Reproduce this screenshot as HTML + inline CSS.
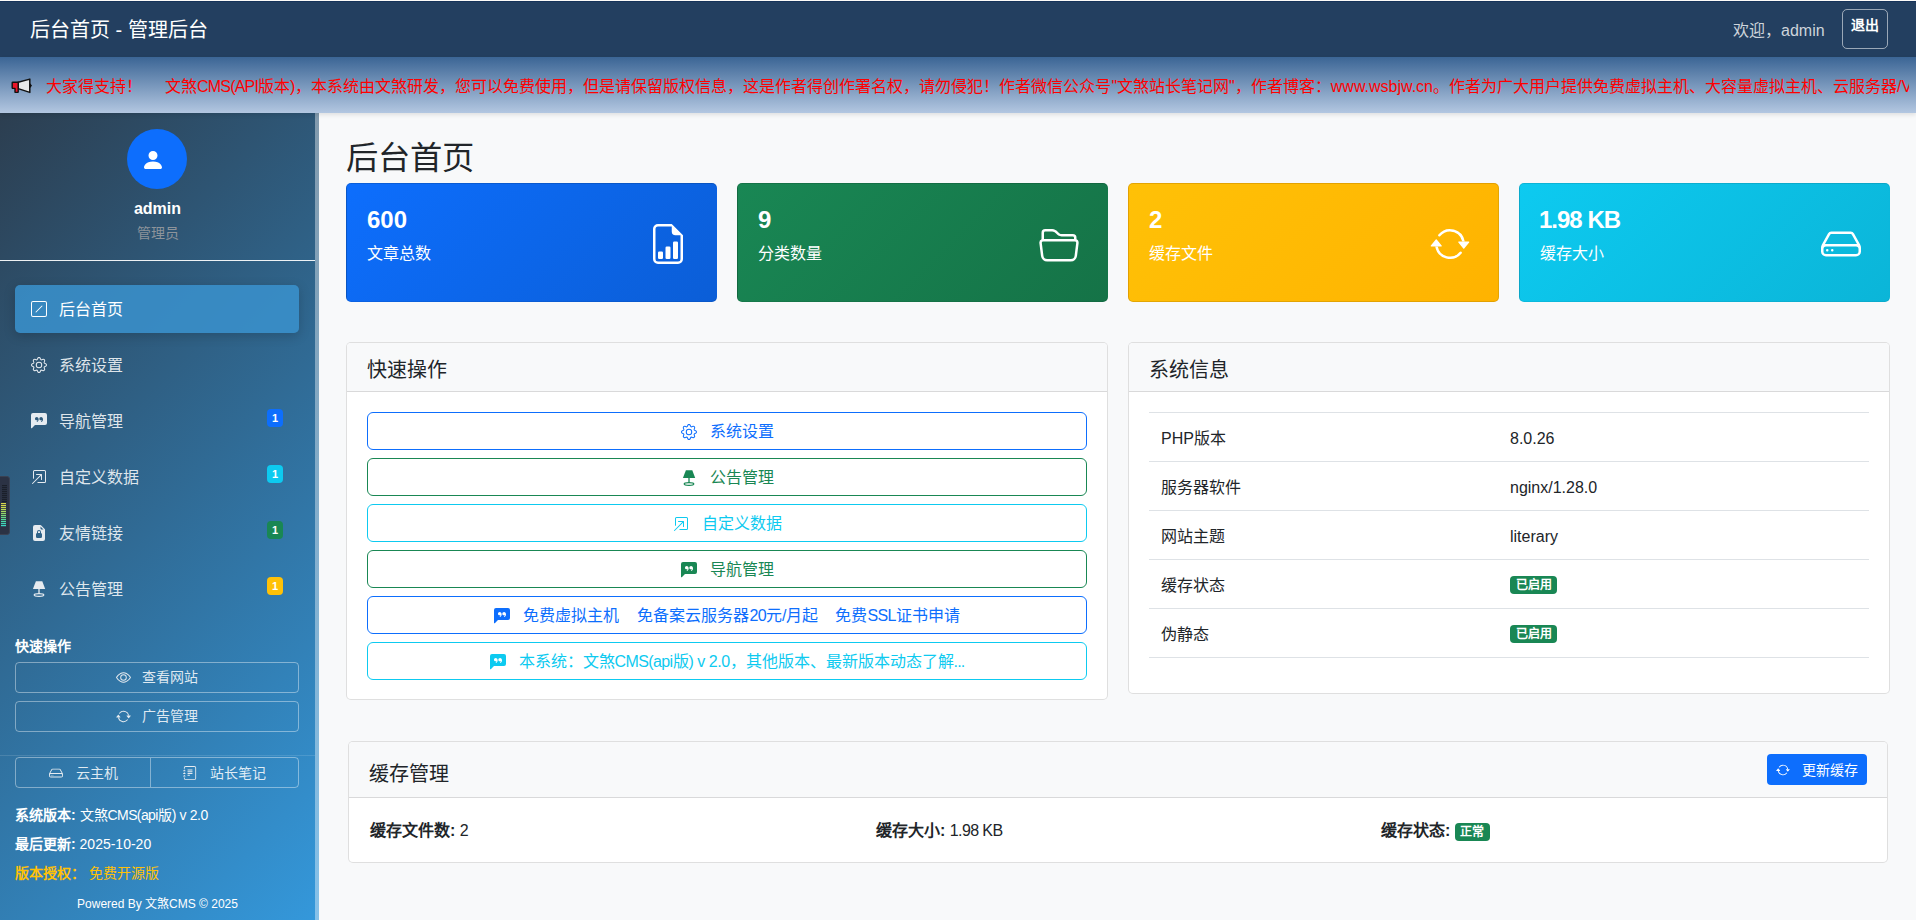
<!DOCTYPE html>
<html lang="zh-CN"><head><meta charset="utf-8"><title>后台首页 - 管理后台</title>
<style>
*{box-sizing:border-box;margin:0;padding:0}
html,body{width:1916px;height:920px;overflow:hidden;background:#f8f9fa;font-family:"Liberation Sans",sans-serif;color:#212529;font-size:16px;line-height:1.5}
.abs{position:absolute}
svg{display:block}
#topline{left:0;top:0;width:1916px;height:1px;background:#fdfbf8}
#nav{left:0;top:1px;width:1916px;height:56px;background:#233f60;border-top:1px solid #16335a}
#brand{left:30px;top:14px;color:#fff;font-size:20px;line-height:30px;white-space:nowrap}
#welcome{left:1733px;top:15px;color:rgba(255,255,255,.78);font-size:16px;line-height:30px;white-space:nowrap}
#logout{left:1842px;top:9px;width:46px;height:40px;border:1px solid rgba(255,255,255,.55);border-radius:5px;color:#fff;font-size:14px;font-weight:bold;text-align:center;line-height:30px}
#marq{left:0;top:57px;width:1916px;height:56px;background:linear-gradient(to bottom,#3b6595 0%,#b3c7e1 100%);box-shadow:0 2px 4px rgba(0,0,0,.1);overflow:hidden;z-index:3}
#marqtext{left:46px;top:15px;width:1863px;overflow:hidden;white-space:nowrap;color:#ff0000;font-size:16px;line-height:30px}
#side{left:0;top:113px;width:319px;height:807px;background:linear-gradient(135deg,#2c3e50 0%,#3498db 100%) border-box;border-right:4px solid rgba(255,255,255,.4);overflow:hidden;z-index:1}
#sbar{left:315px;top:113px;width:4px;height:807px;background:rgba(200,215,230,.55)}
.navi{position:absolute;left:15px;width:284px;height:48px;border-radius:5px;color:rgba(255,255,255,.85);font-size:16px}
.navi.active{background:rgba(58,146,206,.85);box-shadow:0 3px 12px rgba(0,0,0,.18);color:#fff}
.navi .ic{position:absolute;left:16px;top:16px;width:16px;height:16px}
.navi .tx{position:absolute;left:44px;top:13px;line-height:24px;white-space:nowrap}
.badge{position:absolute;left:252px;top:12px;width:16px;height:18px;border-radius:4px;color:#fff;font-size:11px;font-weight:bold;text-align:center;line-height:18px}
.sbtn{position:absolute;left:15px;width:284px;height:31px;border:1px solid rgba(255,255,255,.4);border-radius:4px;color:rgba(255,255,255,.85);font-size:14px}
.main{position:absolute}
.card{position:absolute;border:1px solid rgba(0,0,0,.125);border-radius:5px;background:#fff;overflow:hidden}
.stat{color:#fff}
.stat .num{position:absolute;left:20px;top:21px;font-size:24px;font-weight:bold;line-height:29px;white-space:nowrap}
.stat .lbl{position:absolute;left:20px;top:58px;font-size:16px;line-height:24px}
.stat svg{position:absolute;left:301px;top:40px;width:40px;height:40px}
.chead{position:absolute;left:0;top:0;right:0;height:49px;background:#f8f9fa;border-bottom:1px solid rgba(0,0,0,.125)}
.chead h5{position:absolute;left:20px;top:15px;font-size:20px;font-weight:normal;line-height:24px;color:#212529}
.qbtn{position:absolute;left:20px;width:720px;height:38px;padding-top:1px;border:1px solid;border-radius:6px;font-size:16px;line-height:24px;display:flex;align-items:center;justify-content:center;white-space:nowrap}
.qbtn svg{width:16px;height:16px;margin-right:13px}
.tr{position:absolute;left:20px;width:720px;height:49px;border-top:1px solid #dee2e6;font-size:16px;color:#212529}
.tr .c1{position:absolute;left:12px;top:14px;line-height:24px}
.tr .c2{position:absolute;left:361px;top:14px;line-height:24px}
.gb{display:inline-block;position:relative;top:-2px;background:#198754;color:#fff;font-size:12px;line-height:18px;padding:0 5.5px;border-radius:4px;font-weight:bold}
</style></head><body>
<div id="topline" class="abs"></div>
<div id="nav" class="abs">
  <div id="brand" class="abs" style="top:13px">后台首页 - 管理后台</div>
  <div id="welcome" class="abs" style="top:14px">欢迎，admin</div>
  <div id="logout" class="abs" style="top:7px">退出</div>
</div>
<div id="marq" class="abs">
  <svg class="abs" style="left:11px;top:21px" width="22" height="17" viewBox="0 0 22 17">
    <path d="M18.8 6 L20.3 7.7 L18.8 9.4 Z" fill="#111" stroke="#111" stroke-width="1.2" stroke-linejoin="round"/>
    <path d="M7.2 4.2 L18.8 1.1 L18.8 14.4 L7.2 10.6 Z" fill="#e8e8e8" stroke="#111" stroke-width="1.5" stroke-linejoin="round"/>
    <path d="M1.2 4.8 Q1.2 4.2 1.8 4.2 L7.2 4.2 L7.2 14 Q7.2 14.4 6.8 14.4 L4.4 14.4 Q4 14.4 4 14 L4 10.4 L1.8 10.4 Q1.2 10.4 1.2 9.8 Z" fill="#ec1427" stroke="#111" stroke-width="1.4" stroke-linejoin="round"/>
  </svg>
  <div id="marqtext" class="abs">大家得支持！<span style="display:inline-block;width:23px"></span>文煞<span style="letter-spacing:-0.8px">CMS(API</span>版本)，本系统由文煞研发，您可以免费使用，但是请保留版权信息，这是作者得创作署名权，请勿侵犯！作者微信公众号"文煞站长笔记网"，作者博客：www.wsbjw.cn。作者为广大用户提供免费虚拟主机、大容量虚拟主机、云服务器/VPS服务器</div>
</div>

<div id="side" class="abs">
  <div class="abs" style="left:127px;top:16px;width:60px;height:60px;border-radius:50%;background:#0d6efd"></div>
  <svg class="abs" style="left:141px;top:35px" width="24" height="24" viewBox="0 0 16 16"><path fill="#fff" d="M3 14s-1 0-1-1 1-4 6-4 6 3 6 4-1 1-1 1zm5-6a3 3 0 1 0 0-6 3 3 0 0 0 0 6"/></svg>
  <div class="abs" style="left:0;width:315px;top:84px;text-align:center;color:#fff;font-weight:bold;font-size:16px;line-height:24px">admin</div>
  <div class="abs" style="left:0;width:315px;top:110px;text-align:center;color:#8d949b;font-size:14px;line-height:20px">管理员</div>
  <div class="abs" style="left:0;top:147px;width:315px;height:1px;background:rgba(255,255,255,.92)"></div>

  <div class="navi active" style="top:172px">
    <svg class="ic" viewBox="0 0 16 16" fill="#fff"><path d="M14 1a1 1 0 0 1 1 1v12a1 1 0 0 1-1 1H2a1 1 0 0 1-1-1V2a1 1 0 0 1 1-1zM2 0a2 2 0 0 0-2 2v12a2 2 0 0 0 2 2h12a2 2 0 0 0 2-2V2a2 2 0 0 0-2-2z"/><path d="M11.354 4.646a.5.5 0 0 1 0 .708l-6 6a.5.5 0 0 1-.708-.708l6-6a.5.5 0 0 1 .708 0"/></svg>
    <div class="tx">后台首页</div>
  </div>
  <div class="navi" style="top:228px">
    <svg class="ic" viewBox="0 0 16 16" fill="#e6ebf0"><path d="M8 4.754a3.246 3.246 0 1 0 0 6.492 3.246 3.246 0 0 0 0-6.492M5.754 8a2.246 2.246 0 1 1 4.492 0 2.246 2.246 0 0 1-4.492 0"/><path d="M9.796 1.343c-.527-1.79-3.065-1.79-3.592 0l-.094.319a.873.873 0 0 1-1.255.52l-.292-.16c-1.64-.892-3.433.902-2.54 2.541l.159.292a.873.873 0 0 1-.52 1.255l-.319.094c-1.79.527-1.790 3.065 0 3.592l.319.094a.873.873 0 0 1 .52 1.255l-.16.292c-.892 1.64.901 3.434 2.541 2.54l.292-.159a.873.873 0 0 1 1.255.52l.094.319c.527 1.79 3.065 1.79 3.592 0l.094-.319a.873.873 0 0 1 1.255-.52l.292.16c1.64.893 3.434-.902 2.54-2.541l-.159-.292a.873.873 0 0 1 .52-1.255l.319-.094c1.79-.527 1.79-3.065 0-3.592l-.319-.094a.873.873 0 0 1-.52-1.255l.16-.292c.893-1.64-.902-3.433-2.541-2.54l-.292.159a.873.873 0 0 1-1.255-.52zm-2.633.283c.246-.835 1.428-.835 1.674 0l.094.319a1.873 1.873 0 0 0 2.693 1.115l.291-.16c.764-.415 1.6.42 1.184 1.185l-.159.292a1.873 1.873 0 0 0 1.116 2.692l.318.094c.835.246.835 1.428 0 1.674l-.319.094a1.873 1.873 0 0 0-1.115 2.693l.16.291c.415.764-.42 1.600-1.185 1.184l-.291-.159a1.873 1.873 0 0 0-2.693 1.116l-.094.318c-.246.835-1.428.835-1.674 0l-.094-.319a1.873 1.873 0 0 0-2.692-1.115l-.292.16c-.764.415-1.6-.42-1.184-1.185l.159-.291A1.873 1.873 0 0 0 1.945 8.93l-.319-.094c-.835-.246-.835-1.428 0-1.674l.319-.094A1.873 1.873 0 0 0 3.060 4.377l-.16-.292c-.415-.764.42-1.600 1.185-1.184l.292.159a1.873 1.873 0 0 0 2.692-1.115z"/></svg>
    <div class="tx">系统设置</div>
  </div>
  <div class="navi" style="top:284px">
    <svg class="ic" viewBox="0 0 16 16" fill="#e6ebf0"><path d="M0 2a2 2 0 0 1 2-2h12a2 2 0 0 1 2 2v8a2 2 0 0 1-2 2H4.414a1 1 0 0 0-.707.293L.854 15.146A.5.5 0 0 1 0 14.793zm7.194 2.766a1.7 1.7 0 0 0-.227-.272 1.5 1.5 0 0 0-.469-.324l-.008-.004A1.8 1.8 0 0 0 5.734 4C4.776 4 4 4.746 4 5.667c0 .92.776 1.666 1.734 1.666.343 0 .662-.095.931-.26-.137.389-.39.804-.81 1.22a.405.405 0 0 0 .011.59c.173.16.447.155.614-.01 1.334-1.329 1.37-2.758.941-3.706a2.5 2.5 0 0 0-.227-.4zM11 7.073c-.136.389-.39.804-.81 1.22a.405.405 0 0 0 .012.59c.172.16.446.155.613-.01 1.334-1.329 1.37-2.758.942-3.706a2.5 2.5 0 0 0-.228-.4 1.7 1.7 0 0 0-.227-.273 1.5 1.5 0 0 0-.469-.324l-.008-.004A1.8 1.8 0 0 0 10.070 4c-.957 0-1.734.746-1.734 1.667 0 .92.777 1.666 1.734 1.666.343 0 .662-.095.931-.26z"/></svg>
    <div class="tx">导航管理</div>
    <div class="badge" style="background:#0d6efd">1</div>
  </div>
  <div class="navi" style="top:340px">
    <svg class="ic" viewBox="0 0 16 16" fill="#e6ebf0"><path fill-rule="evenodd" d="M6.364 13.5a.5.5 0 0 0 .5.5H13.5a1.5 1.5 0 0 0 1.5-1.5v-10A1.5 1.5 0 0 0 13.5 1h-10A1.5 1.5 0 0 0 2 2.5v6.636a.5.5 0 1 0 1 0V2.5a.5.5 0 0 1 .5-.5h10a.5.5 0 0 1 .5.5v10a.5.5 0 0 1-.5.5H6.864a.5.5 0 0 0-.5.5"/><path fill-rule="evenodd" d="M11 5.5a.5.5 0 0 0-.5-.5h-5a.5.5 0 0 0 0 1h3.793l-8.147 8.146a.5.5 0 0 0 .708.708L10 6.707V10.5a.5.5 0 0 0 1 0z"/></svg>
    <div class="tx">自定义数据</div>
    <div class="badge" style="background:#0dcaf0">1</div>
  </div>
  <div class="navi" style="top:396px">
    <svg class="ic" viewBox="0 0 16 16" fill="#e6ebf0"><path d="M7 7a1 1 0 0 1 2 0v1H7z"/><path d="M9.293 0H4a2 2 0 0 0-2 2v12a2 2 0 0 0 2 2h8a2 2 0 0 0 2-2V4.707A1 1 0 0 0 13.707 4L10 .293A1 1 0 0 0 9.293 0M9.5 3.5v-2l3 3h-2a1 1 0 0 1-1-1M10 7v1.076c.54.166 1 .597 1 1.224v2.4c0 .816-.781 1.3-1.5 1.3h-3c-.719 0-1.5-.484-1.5-1.3V9.3c0-.627.46-1.058 1-1.224V7a2 2 0 1 1 4 0"/></svg>
    <div class="tx">友情链接</div>
    <div class="badge" style="background:#198754">1</div>
  </div>
  <div class="navi" style="top:452px">
    <svg class="ic" viewBox="0 0 16 16" fill="#e6ebf0"><path d="M4.9 0.2h6.4l2.9 7.8H1.9z"/><rect x="7.35" y="8" width="1.3" height="5"/><ellipse cx="8" cy="14" rx="4.8" ry="1.35" fill="none" stroke="#e6ebf0" stroke-width="1.2"/></svg>
    <div class="tx">公告管理</div>
    <div class="badge" style="background:#ffc107">1</div>
  </div>

  <div class="abs" style="left:15px;top:523px;color:#fff;font-size:14px;font-weight:bold;line-height:20px">快速操作</div>
  <div class="sbtn" style="top:549px">
    <svg class="abs" style="left:100px;top:7px" width="15" height="15" viewBox="0 0 16 16" fill="#e6ebf0"><path d="M16 8s-3-5.5-8-5.5S0 8 0 8s3 5.5 8 5.5S16 8 16 8M1.173 8a13 13 0 0 1 1.66-2.043C4.12 4.668 5.88 3.5 8 3.5s3.879 1.168 5.168 2.457A13 13 0 0 1 14.828 8q-.086.13-.195.288c-.335.48-.83 1.12-1.465 1.755C11.879 11.332 10.119 12.5 8 12.5s-3.879-1.168-5.168-2.457A13 13 0 0 1 1.172 8z"/><path d="M8 5.5a2.5 2.5 0 1 0 0 5 2.5 2.5 0 0 0 0-5M4.5 8a3.5 3.5 0 1 1 7 0 3.5 3.5 0 0 1-7 0"/></svg>
    <div class="abs" style="left:126px;top:4px;line-height:20px">查看网站</div>
  </div>
  <div class="sbtn" style="top:588px">
    <svg class="abs" style="left:100px;top:7px" width="15" height="15" viewBox="0 0 16 16" fill="#e6ebf0"><path d="M11.534 7h3.932a.25.25 0 0 1 .192.41l-1.966 2.36a.25.25 0 0 1-.384 0l-1.966-2.36a.25.25 0 0 1 .192-.41m-11 2h3.932a.25.25 0 0 0 .192-.41L2.692 6.23a.25.25 0 0 0-.384 0L.342 8.59A.25.25 0 0 0 .534 9"/><path fill-rule="evenodd" d="M8 3c-1.552 0-2.94.707-3.857 1.818a.5.5 0 1 1-.771-.636A6.002 6.002 0 0 1 13.917 7H12.9A5 5 0 0 0 8 3M3.1 9a5.002 5.002 0 0 0 8.757 2.182.5.5 0 1 1 .771.636A6.002 6.002 0 0 1 2.083 9z"/></svg>
    <div class="abs" style="left:126px;top:4px;line-height:20px">广告管理</div>
  </div>
  <div class="abs" style="left:0;top:642px;width:315px;height:1px;background:rgba(255,255,255,.12)"></div>
  <div class="sbtn" style="top:644px;height:31px">
    <div class="abs" style="left:134px;top:0;width:1px;height:29px;background:rgba(255,255,255,.4)"></div>
    <svg class="abs" style="left:33px;top:8px" width="14" height="14" viewBox="0 0 16 16" fill="#e6ebf0"><path d="M4.5 11a.5.5 0 1 0 0-1 .5.5 0 0 0 0 1M3 10.5a.5.5 0 1 1-1 0 .5.5 0 0 1 1 0"/><path d="M16 11a2 2 0 0 1-2 2H2a2 2 0 0 1-2-2V9.51c0-.418.105-.83.305-1.197l2.472-4.531A1.5 1.5 0 0 1 4.094 3h7.812a1.5 1.5 0 0 1 1.317.782l2.472 4.53c.2.368.305.78.305 1.198zM3.655 4.26 1.592 8.043Q1.79 8 2 8h12q.21 0 .408.042L12.345 4.26a.5.5 0 0 0-.439-.26H4.094a.5.5 0 0 0-.44.26zM1 10v1a1 1 0 0 0 1 1h12a1 1 0 0 0 1-1v-1a1 1 0 0 0-1-1H2a1 1 0 0 0-1 1"/></svg>
    <div class="abs" style="left:60px;top:5px;line-height:20px">云主机</div>
    <svg class="abs" style="left:167px;top:8px" width="14" height="14" viewBox="0 0 16 16" fill="#e6ebf0"><path d="M5 10.5a.5.5 0 0 1 .5-.5h2a.5.5 0 0 1 0 1h-2a.5.5 0 0 1-.5-.5m0-2a.5.5 0 0 1 .5-.5h5a.5.5 0 0 1 0 1h-5a.5.5 0 0 1-.5-.5m0-2a.5.5 0 0 1 .5-.5h5a.5.5 0 0 1 0 1h-5a.5.5 0 0 1-.5-.5m0-2a.5.5 0 0 1 .5-.5h5a.5.5 0 0 1 0 1h-5a.5.5 0 0 1-.5-.5"/><path d="M3 0h10a2 2 0 0 1 2 2v12a2 2 0 0 1-2 2H3a2 2 0 0 1-2-2v-1h1v1a1 1 0 0 0 1 1h10a1 1 0 0 0 1-1V2a1 1 0 0 0-1-1H3a1 1 0 0 0-1 1v1H1V2a2 2 0 0 1 2-2"/><path d="M1 5v-.5a.5.5 0 0 1 1 0V5h.5a.5.5 0 0 1 0 1h-2a.5.5 0 0 1 0-1zm0 3v-.5a.5.5 0 0 1 1 0V8h.5a.5.5 0 0 1 0 1h-2a.5.5 0 0 1 0-1zm0 3v-.5a.5.5 0 0 1 1 0v.5h.5a.5.5 0 0 1 0 1h-2a.5.5 0 0 1 0-1z"/></svg>
    <div class="abs" style="left:194px;top:5px;line-height:20px">站长笔记</div>
  </div>
  <div class="abs" style="left:15px;top:692px;color:#fff;font-size:14px;line-height:20px;white-space:nowrap"><b>系统版本:</b> 文煞<span style="letter-spacing:-0.6px">CMS(api</span>版<span style="letter-spacing:-0.4px">) v 2.0</span></div>
  <div class="abs" style="left:15px;top:721px;color:#fff;font-size:14px;line-height:20px;white-space:nowrap"><b>最后更新:</b> 2025-10-20</div>
  <div class="abs" style="left:15px;top:750px;color:#ffc107;font-size:14px;line-height:20px;white-space:nowrap"><b>版本授权：</b>&nbsp;免费开源版</div>
  <div class="abs" style="left:0;width:315px;top:782px;color:#fff;font-size:12px;line-height:18px;text-align:center;white-space:nowrap">Powered By 文煞CMS © 2025</div>
</div>


<!-- main -->
<div class="abs" style="left:346px;top:138px;font-size:32.3px;line-height:40px;color:#212529;white-space:nowrap">后台首页</div>

<div class="card stat" style="left:346px;top:183px;width:371px;height:119px;background:linear-gradient(135deg,#0d6efd,#0b5ed7);border-color:rgba(0,0,0,.1)">
  <div class="num">600</div><div class="lbl">文章总数</div>
  <svg viewBox="0 0 16 16" fill="#fff"><path d="M10 13.5a.5.5 0 0 0 .5.5h1a.5.5 0 0 0 .5-.5v-6a.5.5 0 0 0-.5-.5h-1a.5.5 0 0 0-.5.5zm-2.5.5a.5.5 0 0 1-.5-.5v-4a.5.5 0 0 1 .5-.5h1a.5.5 0 0 1 .5.5v4a.5.5 0 0 1-.5.5zm-3 0a.5.5 0 0 1-.5-.5v-2a.5.5 0 0 1 .5-.5h1a.5.5 0 0 1 .5.5v2a.5.5 0 0 1-.5.5z"/><path d="M14 14V4.5L9.5 0H4a2 2 0 0 0-2 2v12a2 2 0 0 0 2 2h8a2 2 0 0 0 2-2M9.5 3A1.5 1.5 0 0 0 11 4.5h2V14a1 1 0 0 1-1 1H4a1 1 0 0 1-1-1V2a1 1 0 0 1 1-1h5.5z"/></svg>
</div>
<div class="card stat" style="left:737px;top:183px;width:371px;height:119px;background:linear-gradient(135deg,#198754,#157347);border-color:rgba(0,0,0,.1)">
  <div class="num">9</div><div class="lbl">分类数量</div>
  <svg viewBox="0 0 16 16" fill="#fff"><path d="M1 3.5A1.5 1.5 0 0 1 2.5 2h2.764c.958 0 1.760.56 2.311 1.184C7.985 3.648 8.480 4 9 4h4.5A1.5 1.5 0 0 1 15 5.5v.64c.57.265.94.876.856 1.546l-.64 5.124A2.5 2.5 0 0 1 12.733 15H3.266a2.5 2.5 0 0 1-2.481-2.190l-.64-5.124A1.5 1.5 0 0 1 1 6.14zM2 6h12v-.5a.5.5 0 0 0-.5-.5H9c-.964 0-1.710-.629-2.174-1.154C6.374 3.334 5.820 3 5.264 3H2.5a.5.5 0 0 0-.5.5zm-.367 1a.5.5 0 0 0-.496.562l.64 5.124A1.5 1.5 0 0 0 3.266 14h9.468a1.5 1.5 0 0 0 1.489-1.314l.64-5.124A.5.5 0 0 0 14.367 7z"/></svg>
</div>
<div class="card stat" style="left:1128px;top:183px;width:371px;height:119px;background:linear-gradient(135deg,#ffc107,#ffb300);border-color:rgba(200,140,0,.5)">
  <div class="num">2</div><div class="lbl">缓存文件</div>
  <svg viewBox="0 0 16 16" fill="#fff"><path d="M11.534 7h3.932a.25.25 0 0 1 .192.41l-1.966 2.36a.25.25 0 0 1-.384 0l-1.966-2.36a.25.25 0 0 1 .192-.41m-11 2h3.932a.25.25 0 0 0 .192-.41L2.692 6.23a.25.25 0 0 0-.384 0L.342 8.59A.25.25 0 0 0 .534 9"/><path fill-rule="evenodd" d="M8 3c-1.552 0-2.940.707-3.857 1.818a.5.5 0 1 1-.771-.636A6.002 6.002 0 0 1 13.917 7H12.9A5 5 0 0 0 8 3M3.1 9a5.002 5.002 0 0 0 8.757 2.182.5.5 0 1 1 .771.636A6.002 6.002 0 0 1 2.083 9z"/></svg>
</div>
<div class="card stat" style="left:1519px;top:183px;width:371px;height:119px;background:linear-gradient(135deg,#0dcaf0,#0bb5d8);border-color:rgba(0,0,0,.08)">
  <div class="num" style="letter-spacing:-1px;left:19px">1.98 KB</div><div class="lbl">缓存大小</div>
  <svg viewBox="0 0 16 16" fill="#fff"><path d="M4.5 11a.5.5 0 1 0 0-1 .5.5 0 0 0 0 1M3 10.5a.5.5 0 1 1-1 0 .5.5 0 0 1 1 0"/><path d="M16 11a2 2 0 0 1-2 2H2a2 2 0 0 1-2-2V9.51c0-.418.105-.83.305-1.197l2.472-4.531A1.5 1.5 0 0 1 4.094 3h7.812a1.5 1.5 0 0 1 1.317.782l2.472 4.53c.2.368.305.78.305 1.198zM3.655 4.26 1.592 8.043Q1.790 8 2 8h12q.21 0 .408.042L12.345 4.26a.5.5 0 0 0-.439-.26H4.094a.5.5 0 0 0-.44.26zM1 10v1a1 1 0 0 0 1 1h12a1 1 0 0 0 1-1v-1a1 1 0 0 0-1-1H2a1 1 0 0 0-1 1"/></svg>
</div>

<!-- quick ops -->
<div class="card" style="left:346px;top:342px;width:762px;height:358px">
  <div class="chead"><h5>快速操作</h5></div>
  <div class="qbtn" style="top:69px;border-color:#0d6efd;color:#0d6efd">
    <svg viewBox="0 0 16 16" fill="#0d6efd"><path d="M8 4.754a3.246 3.246 0 1 0 0 6.492 3.246 3.246 0 0 0 0-6.492M5.754 8a2.246 2.246 0 1 1 4.492 0 2.246 2.246 0 0 1-4.492 0"/><path d="M9.796 1.343c-.527-1.790-3.065-1.790-3.592 0l-.094.319a.873.873 0 0 1-1.255.52l-.292-.16c-1.64-.892-3.433.902-2.54 2.541l.159.292a.873.873 0 0 1-.52 1.255l-.319.094c-1.790.527-1.790 3.065 0 3.592l.319.094a.873.873 0 0 1 .52 1.255l-.16.292c-.892 1.64.901 3.434 2.541 2.54l.292-.159a.873.873 0 0 1 1.255.52l.094.319c.527 1.790 3.065 1.790 3.592 0l.094-.319a.873.873 0 0 1 1.255-.52l.292.16c1.64.893 3.434-.902 2.54-2.541l-.159-.292a.873.873 0 0 1 .52-1.255l.319-.094c1.790-.527 1.790-3.065 0-3.592l-.319-.094a.873.873 0 0 1-.52-1.255l.16-.292c.893-1.64-.902-3.433-2.541-2.54l-.292.159a.873.873 0 0 1-1.255-.52zm-2.633.283c.246-.835 1.428-.835 1.674 0l.094.319a1.873 1.873 0 0 0 2.693 1.115l.291-.16c.764-.415 1.6.42 1.184 1.185l-.159.292a1.873 1.873 0 0 0 1.116 2.692l.318.094c.835.246.835 1.428 0 1.674l-.319.094a1.873 1.873 0 0 0-1.115 2.693l.16.291c.415.764-.42 1.6-1.185 1.184l-.291-.159a1.873 1.873 0 0 0-2.693 1.116l-.094.318c-.246.835-1.428.835-1.674 0l-.094-.319a1.873 1.873 0 0 0-2.692-1.115l-.292.16c-.764.415-1.6-.42-1.184-1.185l.159-.291A1.873 1.873 0 0 0 1.945 8.93l-.319-.094c-.835-.246-.835-1.428 0-1.674l.319-.094A1.873 1.873 0 0 0 3.06 4.377l-.16-.292c-.415-.764.42-1.6 1.185-1.184l.292.159a1.873 1.873 0 0 0 2.692-1.115z"/></svg>
    <span>系统设置</span>
  </div>
  <div class="qbtn" style="top:115px;border-color:#198754;color:#198754">
    <svg viewBox="0 0 16 16" fill="#198754"><path d="M4.9 0.2h6.4l2.9 7.8H1.9z"/><rect x="7.35" y="8" width="1.3" height="5"/><ellipse cx="8" cy="14" rx="4.8" ry="1.35" fill="none" stroke="#198754" stroke-width="1.2"/></svg>
    <span>公告管理</span>
  </div>
  <div class="qbtn" style="top:161px;border-color:#0dcaf0;color:#0dcaf0">
    <svg viewBox="0 0 16 16" fill="#0dcaf0"><path fill-rule="evenodd" d="M6.364 13.5a.5.5 0 0 0 .5.5H13.5a1.5 1.5 0 0 0 1.5-1.5v-10A1.5 1.5 0 0 0 13.5 1h-10A1.5 1.5 0 0 0 2 2.5v6.636a.5.5 0 1 0 1 0V2.5a.5.5 0 0 1 .5-.5h10a.5.5 0 0 1 .5.5v10a.5.5 0 0 1-.5.5H6.864a.5.5 0 0 0-.5.5"/><path fill-rule="evenodd" d="M11 5.5a.5.5 0 0 0-.5-.5h-5a.5.5 0 0 0 0 1h3.793l-8.147 8.146a.5.5 0 0 0 .708.708L10 6.707V10.5a.5.5 0 0 0 1 0z"/></svg>
    <span>自定义数据</span>
  </div>
  <div class="qbtn" style="top:207px;border-color:#198754;color:#198754">
    <svg viewBox="0 0 16 16" fill="#198754"><path d="M0 2a2 2 0 0 1 2-2h12a2 2 0 0 1 2 2v8a2 2 0 0 1-2 2H4.414a1 1 0 0 0-.707.293L.854 15.146A.5.5 0 0 1 0 14.793zm7.194 2.766a1.7 1.7 0 0 0-.227-.272 1.5 1.5 0 0 0-.469-.324l-.008-.004A1.8 1.8 0 0 0 5.734 4C4.776 4 4 4.746 4 5.667c0 .92.776 1.666 1.734 1.666.343 0 .662-.095.931-.26-.137.389-.39.804-.81 1.22a.405.405 0 0 0 .011.59c.173.16.447.155.614-.01 1.334-1.329 1.37-2.758.941-3.706a2.5 2.5 0 0 0-.227-.4zM11 7.073c-.136.389-.39.804-.81 1.22a.405.405 0 0 0 .012.59c.172.16.446.155.613-.01 1.334-1.329 1.37-2.758.942-3.706a2.5 2.5 0 0 0-.228-.4 1.7 1.7 0 0 0-.227-.273 1.5 1.5 0 0 0-.469-.324l-.008-.004A1.8 1.8 0 0 0 10.07 4c-.957 0-1.734.746-1.734 1.667 0 .92.777 1.666 1.734 1.666.343 0 .662-.095.931-.26z"/></svg>
    <span>导航管理</span>
  </div>
  <div class="qbtn" style="top:253px;border-color:#0d6efd;color:#0d6efd">
    <svg viewBox="0 0 16 16" fill="#0d6efd"><path d="M0 2a2 2 0 0 1 2-2h12a2 2 0 0 1 2 2v8a2 2 0 0 1-2 2H4.414a1 1 0 0 0-.707.293L.854 15.146A.5.5 0 0 1 0 14.793zm7.194 2.766a1.7 1.7 0 0 0-.227-.272 1.5 1.5 0 0 0-.469-.324l-.008-.004A1.8 1.8 0 0 0 5.734 4C4.776 4 4 4.746 4 5.667c0 .92.776 1.666 1.734 1.666.343 0 .662-.095.931-.26-.137.389-.39.804-.81 1.22a.405.405 0 0 0 .011.59c.173.16.447.155.614-.01 1.334-1.329 1.37-2.758.941-3.706a2.5 2.5 0 0 0-.227-.4zM11 7.073c-.136.389-.39.804-.81 1.22a.405.405 0 0 0 .012.59c.172.16.446.155.613-.01 1.334-1.329 1.37-2.758.942-3.706a2.5 2.5 0 0 0-.228-.4 1.7 1.7 0 0 0-.227-.273 1.5 1.5 0 0 0-.469-.324l-.008-.004A1.8 1.8 0 0 0 10.07 4c-.957 0-1.734.746-1.734 1.667 0 .92.777 1.666 1.734 1.666.343 0 .662-.095.931-.26z"/></svg>
    <span>免费虚拟主机</span><span style="margin-left:18px">免备案云服务器<span style="letter-spacing:-0.6px">20</span>元/月起</span><span style="margin-left:17px">免费<span style="letter-spacing:-0.7px">SSL</span>证书申请</span>
  </div>
  <div class="qbtn" style="top:299px;border-color:#0dcaf0;color:#0dcaf0">
    <svg viewBox="0 0 16 16" fill="#0dcaf0"><path d="M0 2a2 2 0 0 1 2-2h12a2 2 0 0 1 2 2v8a2 2 0 0 1-2 2H4.414a1 1 0 0 0-.707.293L.854 15.146A.5.5 0 0 1 0 14.793zm7.194 2.766a1.7 1.7 0 0 0-.227-.272 1.5 1.5 0 0 0-.469-.324l-.008-.004A1.8 1.8 0 0 0 5.734 4C4.776 4 4 4.746 4 5.667c0 .92.776 1.666 1.734 1.666.343 0 .662-.095.931-.26-.137.389-.39.804-.81 1.22a.405.405 0 0 0 .011.59c.173.16.447.155.614-.01 1.334-1.329 1.37-2.758.941-3.706a2.5 2.5 0 0 0-.227-.4zM11 7.073c-.136.389-.39.804-.81 1.22a.405.405 0 0 0 .012.59c.172.16.446.155.613-.01 1.334-1.329 1.37-2.758.942-3.706a2.5 2.5 0 0 0-.228-.4 1.7 1.7 0 0 0-.227-.273 1.5 1.5 0 0 0-.469-.324l-.008-.004A1.8 1.8 0 0 0 10.07 4c-.957 0-1.734.746-1.734 1.667 0 .92.777 1.666 1.734 1.666.343 0 .662-.095.931-.26z"/></svg>
    <span>本系统：文煞<span style="letter-spacing:-0.6px">CMS(api</span>版<span style="letter-spacing:-0.5px">) v 2.0</span>，其他版本、最新版本动态了解<span style="letter-spacing:-0.8px">...</span></span>
  </div>
</div>

<!-- system info -->
<div class="card" style="left:1128px;top:342px;width:762px;height:352px">
  <div class="chead"><h5>系统信息</h5></div>
  <div class="tr" style="top:69px"><div class="c1">PHP版本</div><div class="c2">8.0.26</div></div>
  <div class="tr" style="top:118px"><div class="c1">服务器软件</div><div class="c2">nginx/1.28.0</div></div>
  <div class="tr" style="top:167px"><div class="c1">网站主题</div><div class="c2">literary</div></div>
  <div class="tr" style="top:216px"><div class="c1">缓存状态</div><div class="c2"><span class="gb">已启用</span></div></div>
  <div class="tr" style="top:265px;height:50px;border-bottom:1px solid #dee2e6"><div class="c1">伪静态</div><div class="c2"><span class="gb">已启用</span></div></div>
</div>

<!-- cache mgmt -->
<div class="card" style="left:348px;top:741px;width:1540px;height:122px">
  <div class="chead" style="height:56px"><h5 style="top:20px">缓存管理</h5>
    <div class="abs" style="left:1418px;top:12px;width:100px;height:31px;background:#0d6efd;border-radius:4px;color:#fff;font-size:14px;line-height:20px">
      <svg class="abs" style="left:9px;top:9px" width="14" height="14" viewBox="0 0 16 16" fill="#fff"><path d="M11.534 7h3.932a.25.25 0 0 1 .192.41l-1.966 2.36a.25.25 0 0 1-.384 0l-1.966-2.36a.25.25 0 0 1 .192-.41m-11 2h3.932a.25.25 0 0 0 .192-.41L2.692 6.23a.25.25 0 0 0-.384 0L.342 8.59A.25.25 0 0 0 .534 9"/><path fill-rule="evenodd" d="M8 3c-1.552 0-2.94.707-3.857 1.818a.5.5 0 1 1-.771-.636A6.002 6.002 0 0 1 13.917 7H12.9A5 5 0 0 0 8 3M3.1 9a5.002 5.002 0 0 0 8.757 2.182.5.5 0 1 1 .771.636A6.002 6.002 0 0 1 2.083 9z"/></svg>
      <div class="abs" style="left:35px;top:6px">更新缓存</div>
    </div>
  </div>
  <div class="abs" style="left:21px;top:77px;font-size:16px;line-height:24px;white-space:nowrap"><b>缓存文件数:</b> 2</div>
  <div class="abs" style="left:527px;top:77px;font-size:16px;line-height:24px;white-space:nowrap"><b>缓存大小:</b> <span style="letter-spacing:-0.6px">1.98 KB</span></div>
  <div class="abs" style="left:1032px;top:77px;font-size:16px;line-height:24px;white-space:nowrap"><b>缓存状态:</b> <span class="gb" style="top:0">正常</span></div>
</div>

<!-- left-edge widget -->
<div class="abs" style="z-index:5;left:-3px;top:476px;width:13px;height:59px;background:#2b3244;border:1px solid #3a4152;border-radius:3px"></div>
<svg class="abs" style="z-index:6;left:1px;top:485px" width="6" height="46" viewBox="0 0 6 46">
  <g fill="#1a1f2a"><rect x="1" y="0" width="5" height="1.2"/><rect x="1" y="2" width="5" height="1.2"/><rect x="1" y="4" width="5" height="1.2"/><rect x="1" y="6" width="5" height="1.2"/><rect x="1" y="8" width="5" height="1.2"/><rect x="1" y="10" width="5" height="1.2"/><rect x="1" y="12" width="5" height="1.2"/><rect x="1" y="14" width="5" height="1.2"/><rect x="1" y="16" width="5" height="1.2"/></g>
  <g><rect x="0" y="18" width="5" height="1.2" fill="#d9d84a"/><rect x="0" y="20" width="5" height="1.2" fill="#d4d84c"/><rect x="0" y="22" width="5" height="1.2" fill="#c8d850"/><rect x="0" y="24" width="5" height="1.2" fill="#b8d858"/><rect x="0" y="26" width="5" height="1.2" fill="#a6d860"/><rect x="0" y="28" width="5" height="1.2" fill="#92d86a"/><rect x="0" y="30" width="5" height="1.2" fill="#7cd878"/><rect x="0" y="32" width="5" height="1.2" fill="#68d888"/><rect x="0" y="34" width="5" height="1.2" fill="#56d898"/><rect x="0" y="36" width="5" height="1.2" fill="#48d8a8"/><rect x="0" y="38" width="5" height="1.2" fill="#40d8b8"/><rect x="0" y="40" width="5" height="1.2" fill="#3ad8c4"/></g>
</svg>
</body></html>
